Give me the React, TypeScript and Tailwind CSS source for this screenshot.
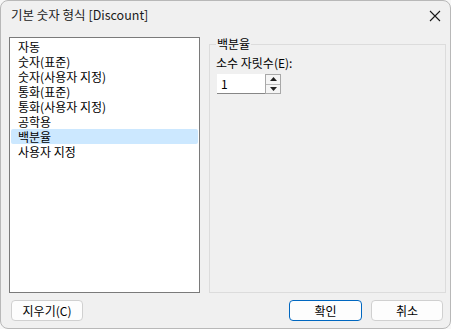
const items = [
  '자동',
  '숫자(표준)',
  '숫자(사용자 지정)',
  '통화(표준)',
  '통화(사용자 지정)',
  '공학용',
  '백분율',
  '사용자 지정',
];

const font = { fontFamily: '"Noto Sans CJK KR", "Noto Sans", sans-serif' };

export default function App() {
  return (
    <div className="w-[451px] h-[329px] bg-[#f7f7f7]" style={font}>
      <div className="h-full flex flex-col rounded-[8px] border border-[#b8b8b8] bg-[#f0f0f0] overflow-hidden">
        {/* title bar */}
        <div className="h-[29px] shrink-0 flex items-center justify-between pl-[10px] pr-[7px]">
          <span className="text-[12.5px] leading-none text-[#1a1a1a]">기본 숫자 형식 [Discount]</span>
          <svg width="12" height="12" viewBox="0 0 12 12" className="mr-[2px]">
            <path d="M1 1 L11 11 M11 1 L1 11" stroke="#1a1a1a" strokeWidth="1.1" fill="none" />
          </svg>
        </div>

        {/* body */}
        <div className="flex items-start gap-[9px] pl-[8px] pr-[4px] mt-[7px]">
          <div className="w-[191px] h-[256px] shrink-0 bg-white border border-[#7a7a7a] px-[1px] pt-[1px]">
            {items.map((t, i) => (
              <div
                key={t}
                className={
                  'h-[15px] flex items-center pl-[7px] text-[12px] leading-[15px] text-black rounded-[2px] ' +
                  (i === 6 ? 'bg-[#cce8ff]' : '')
                }
              >
                {t}
              </div>
            ))}
          </div>

          <fieldset className="w-[237px] h-[257px] -mt-[1px] border border-[#dcdcdc] px-[6px]">
            <legend className="px-[1px] text-[12px] leading-[16px] text-black">백분율</legend>
            <div className="mt-[3px] text-[12px] leading-[16px] text-black">소수 자릿수(E):</div>
            <div className="mt-[3px] ml-[1px] flex h-[20px] w-[64px]">
              <div className="w-[48px] h-full bg-white border-b border-[#868686] flex items-center pl-[4px] text-[12px] leading-none text-black">
                1
              </div>
              <div className="w-[16px] h-full flex flex-col border border-[#a8a8a8] bg-[#f5f5f5]">
                <div className="flex-1 flex items-center justify-center border-b border-[#b8b8b8]">
                  <svg width="7" height="4" viewBox="0 0 7 4">
                    <path d="M0 4 L3.5 0 L7 4 Z" fill="#202020" />
                  </svg>
                </div>
                <div className="flex-1 flex items-center justify-center">
                  <svg width="7" height="4" viewBox="0 0 7 4">
                    <path d="M0 0 L7 0 L3.5 4 Z" fill="#202020" />
                  </svg>
                </div>
              </div>
            </div>
          </fieldset>
        </div>

        {/* buttons */}
        <div className="flex items-center mt-[7px] pl-[10px] pr-[7px]">
          <button className="w-[72px] h-[21px] rounded-[4px] border border-[#d0d0d0] bg-[#fdfdfd] text-[12px] leading-none text-black">
            지우기(C)
          </button>
          <div className="flex-1" />
          <button className="w-[73px] h-[21px] rounded-[4px] border border-[#0067c0] bg-[#fdfdfd] text-[12px] leading-none text-black">
            확인
          </button>
          <button className="ml-[9px] w-[72px] h-[21px] rounded-[4px] border border-[#d0d0d0] bg-[#fdfdfd] text-[12px] leading-none text-black">
            취소
          </button>
        </div>
      </div>
    </div>
  );
}
